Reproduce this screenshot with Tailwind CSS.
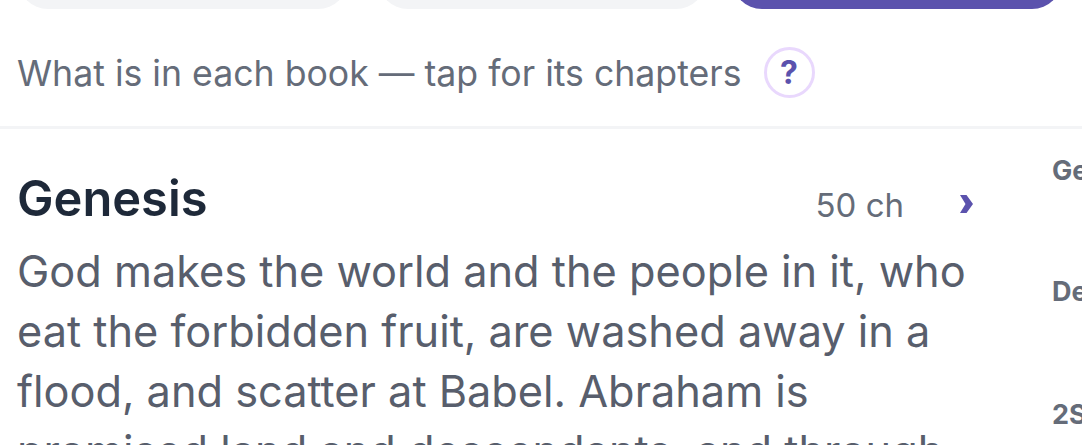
<!DOCTYPE html>
<html lang="en">
<head>
    <meta charset="UTF-8">
    <meta name="viewport" content="width=device-width, initial-scale=1.0">
    <title>Books</title>
    <script src="https://cdn.jsdelivr.net/npm/@tailwindcss/browser@4"></script>
</head>
<body class="bg-white font-['Inter',sans-serif] w-[1082px] h-[445px] overflow-hidden">

    <!-- tabs, cut off by the top of the window -->
    <div class="flex h-[9px] items-end pl-[18px] overflow-hidden">
        <div class="w-[330px] h-[60px] shrink-0 rounded-[30px] bg-gray-100"></div>
        <div class="w-[328px] h-[60px] shrink-0 ml-[30px] rounded-[30px] bg-gray-100"></div>
        <div class="w-[330px] h-[60px] shrink-0 ml-[26px] rounded-[30px] bg-[#5b52ad]"></div>
    </div>

    <div class="flex items-center h-[120px] border-b-[3px] border-gray-100 pl-[17px] pt-[10px]">
        <span class="text-[35.65px] leading-[48px] text-[#656c79]">What is in each book — tap for its chapters</span>
        <div class="ml-[22px] w-[51px] h-[51px] rounded-full border-[3px] border-[#e9d8fd] flex items-center justify-center text-[32px] font-bold text-[#5b52ad]">?</div>
    </div>

    <div class="flex">
        <div class="w-[975px] shrink-0 pl-[17px]">
            <div class="flex items-center h-[60px] mt-[40px]">
                <h2 class="flex-1 text-[48.8px] leading-[60px] font-semibold text-gray-800">Genesis</h2>
                <span class="text-[33px] text-[#656c79] mr-[56px] mt-[14px]">50 ch</span>
                <svg class="mt-[10px] mr-[2px]" width="13" height="18" viewBox="0 0 13 18">
                    <path d="M0 0h6.500l6.500 9-6.500 9H0l5.500-9z" fill="#5b52ad"/>
                </svg>
            </div>
            <p class="text-[43.3px] leading-[60px] text-[#585e6c] w-[958px] mt-[12px]">God makes the world and the people in it, who eat the forbidden fruit, are washed away in a flood, and scatter at Babel. Abraham is promised land and descendants, and through</p>
        </div>
        <div class="flex-1 pl-[77px] overflow-hidden text-[27px] leading-[33px] font-bold text-[#656c79] whitespace-nowrap">
            <div class="mt-[25px]">Genesis</div>
            <div class="mt-[88px]">Deuteronomy</div>
            <div class="mt-[90px]">2Samuel</div>
        </div>
    </div>
</body>
</html>
